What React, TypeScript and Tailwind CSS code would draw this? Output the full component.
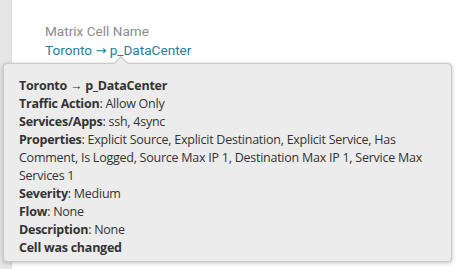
import React from "react";

const rows: { label?: string; value?: string }[] = [
  { label: "Traffic Action", value: "Allow Only" },
  { label: "Services/Apps", value: "ssh, 4sync" },
  {
    label: "Properties",
    value:
      "Explicit Source, Explicit Destination, Explicit Service, Has Comment, Is Logged, Source Max IP 1, Destination Max IP 1, Service Max Services 1",
  },
  { label: "Severity", value: "Medium" },
  { label: "Flow", value: "None" },
  { label: "Description", value: "None" },
];

export default function App() {
  return (
    <div className="w-[456px] h-[269px] bg-white flex overflow-hidden">
      {/* left rail */}
      <div className="w-[12px] shrink-0 bg-[#e6e6e6] border-r border-[#dcdcdc]" />

      <div className="flex-1 flex flex-col relative">
        {/* underlying cell details */}
        <div className="pl-[33px] pt-[22px] font-['Roboto',sans-serif] text-[13.6px] leading-[19px]">
          <div className="text-[#8c8c8c]">Matrix Cell Name</div>
          <div className="text-[#2a7d9c]">
            Toronto <span className="font-['DejaVu_Sans',sans-serif] text-[13px]">→</span> p_DataCenter
          </div>
        </div>

        {/* tooltip */}
        <div className="absolute left-[-9px] top-[63px] w-[449px] h-[199px] rounded-[4px] border border-[#c9c9c9] bg-[#ececec] shadow-[0_1px_4px_rgba(0,0,0,0.25)] pl-[15px] pr-[14px] pt-[13px] font-['Open_Sans',sans-serif] text-[12.5px] tracking-[-0.25px] leading-[18px] text-[#333]">
          <div className="absolute -top-[6px] left-[112px] w-[10px] h-[10px] rotate-45 bg-[#ececec] border-l border-t border-[#c9c9c9]" />
          <div className="font-bold">Toronto → p_DataCenter</div>
          {rows.map((r) => (
            <div key={r.label}>
              <span className="font-bold">{r.label}</span>: {r.value}
            </div>
          ))}
          <div className="font-bold">Cell was changed</div>
        </div>
      </div>
    </div>
  );
}
